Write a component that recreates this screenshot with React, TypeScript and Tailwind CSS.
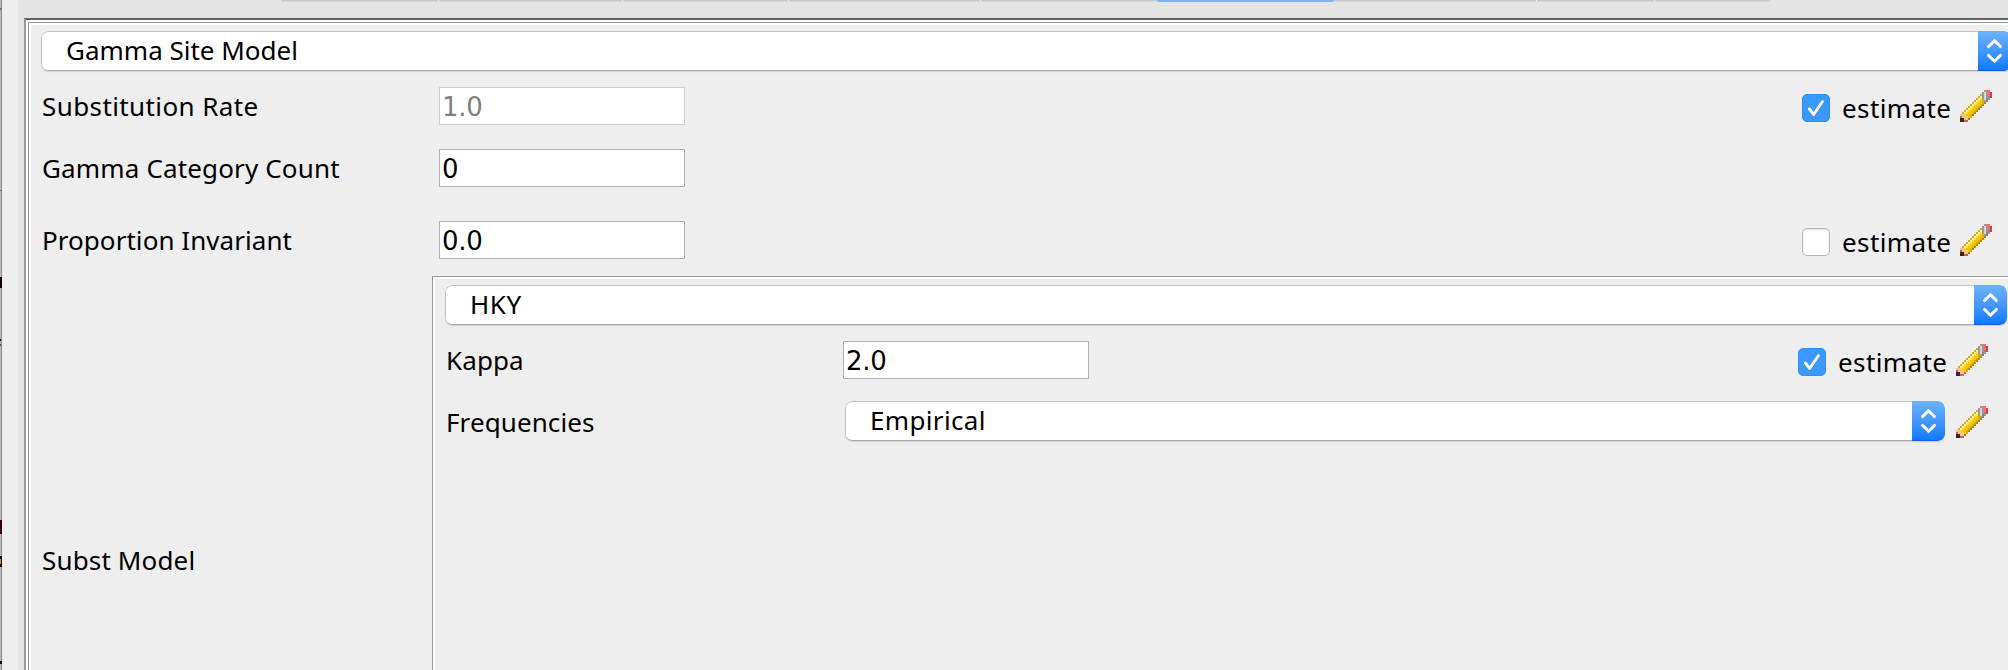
import type { ReactNode } from 'react';

const PENCIL_COLORS: Record<string, string> = {
  g: '#9a9a9a', G: '#d6d6d6', d: '#85858a', p: '#fa6b6b', r: '#cf3f43',
  t: '#dba829', c: '#fff0a0', y: '#ffe02a', o: '#f4c80a', b: '#e0ac00', B: '#b8860b',
  e: '#d0603f', f: '#ffbe96', k: '#2e2a2a',
};

const PENCIL_ROWS = [
  '............gpp.',
  '...........gGgpr',
  '..........tgGgpr',
  '.........tcgGgdr',
  '........tcygGdg.',
  '.......tcyobgd..',
  '......tcyoobB...',
  '.....tcyoobB....',
  '....tcyoobB.....',
  '...tcyoobB......',
  '..tcyoobB.......',
  '.tcyoobB........',
  'ffyoobB.........',
  'effyob..........',
  'kkffe...........',
  'kkee............',
];

function Pencil() {
  return (
    <svg className="h-8 w-8 shrink-0" viewBox="0 0 16 16" shapeRendering="crispEdges">
      {PENCIL_ROWS.flatMap((row, y) =>
        row.split('').map((c, x) =>
          c === '.' ? null : (
            <rect key={`${x}-${y}`} x={x} y={y} width="1" height="1" fill={PENCIL_COLORS[c]} />
          ),
        ),
      )}
    </svg>
  );
}

function Combo({ children, className }: { children: ReactNode; className: string }) {
  return (
    <div
      className={`flex h-10 shrink-0 overflow-hidden rounded-[7px] bg-white shadow-[0_1px_1px_rgba(0,0,0,0.12)] ${className}`}
    >
      <div className="flex-1 rounded-l-[7px] border border-r-0 border-[#c4c4c4] border-b-[#a9a9a9] pl-6 leading-[36px]">
        {children}
      </div>
      <div className="w-[33px] rounded-r-[7px] border-b border-[#0a60f0] bg-linear-to-b from-[#6db3fa] to-[#087aff]">
        <svg className="h-10 w-[33px]" viewBox="0 0 33 40" fill="none" stroke="#fff" strokeWidth="2.9" strokeLinecap="round" strokeLinejoin="miter">
          <path d="M10.5 15.6 16.5 9.8 22.5 15.6M10.5 24.4 16.5 30.2 22.5 24.4" />
        </svg>
      </div>
    </div>
  );
}

function Field({ value, disabled }: { value: string; disabled?: boolean }) {
  return (
    <div
      className={`h-[38px] w-[246px] shrink-0 border bg-white pl-0.5 font-['DejaVu_Sans',sans-serif] leading-[38px] tracking-[-0.3px] ${
        disabled ? 'border-[#cfcfcf] text-[#808080]' : 'border-[#b0b0b0]'
      }`}
    >
      {value}
    </div>
  );
}

function Estimate({ checked }: { checked?: boolean }) {
  return (
    <div className="ml-auto flex items-center pt-1">
      {checked ? (
        <div className="h-7 w-7 rounded-[5px] border border-[#2f8df5] bg-[#3b99fc]">
          <svg className="h-[26px] w-[26px]" viewBox="1 1 26 26" fill="none" strokeLinecap="round" strokeLinejoin="round">
            <path d="M7.4 16 11.7 21.5 20.4 8.8" stroke="#2678d4" strokeWidth="3" opacity=".5" />
            <path d="M7.4 15 11.7 20.5 20.4 7.8" stroke="#fff" strokeWidth="2.9" />
          </svg>
        </div>
      ) : (
        <div className="h-7 w-7 rounded-[5px] border border-[#b5b5b5] bg-white shadow-[inset_0_1px_2px_rgba(0,0,0,0.12)]" />
      )}
      <span className="ml-3 w-[118px] tracking-[0.4px]">estimate</span>
    </div>
  );
}

const TABS = [
  'w-[157px] bg-[#c8c8c8]', 'w-[184px] bg-[#c8c8c8]', 'w-[166px] bg-[#c8c8c8]',
  'w-[192px] bg-[#c8c8c8]', 'w-[177px] bg-[#c8c8c8]', 'w-[177px] bg-[#7fb1ea]',
  'w-[202px] bg-[#c8c8c8]', 'w-[118px] bg-[#c8c8c8]', 'w-[116px] bg-[#c8c8c8]',
];

function TabEdge() {
  return (
    <div className="flex h-[18px] items-start pl-[263px]">
      {TABS.map((tab, i) => (
        <div
          key={i}
          className={`${tab} h-0.5 shrink-0 ${i === 5 ? 'rounded-b-xs' : 'border-b border-[#d9d9d9]'} ${
            i === 0 ? 'rounded-bl-xs' : ''
          } ${[1, 2, 3, 4, 7, 8].includes(i) ? 'border-l border-l-[#f0f0f0]' : ''}`}
        />
      ))}
    </div>
  );
}

function WindowEdge() {
  return (
    <svg className="h-[670px] w-0.5 shrink-0" viewBox="0 0 2 670" shapeRendering="crispEdges">
      <rect width="2" height="670" fill="#bababa" />
      <rect x="1" width="1" height="670" fill="#8c8c8c" />
      <rect y="8" width="2" height="2" fill="#777" />
      <rect y="190" width="2" height="1" fill="#8a7440" />
      <rect y="277" width="2" height="11" fill="#160000" />
      <rect y="339" width="1" height="2" fill="#111" />
      <rect y="344" width="1" height="2" fill="#1a5fa8" />
      <rect x="1" y="350" width="1" height="3" fill="#a08a58" />
      <rect y="520" width="2" height="14" fill="#3a0006" />
      <rect y="556" width="2" height="11" fill="#111" />
      <rect y="559" width="1" height="5" fill="#c98f3c" />
      <rect y="661" width="2" height="3" fill="#111" />
    </svg>
  );
}

export default function App() {
  return (
    <div className="flex h-[670px] w-full overflow-hidden bg-[#eee] font-['Noto_Sans',sans-serif] text-[26px] leading-[40px] whitespace-nowrap text-black">
      <WindowEdge />
      <div className="w-4 shrink-0" />
      <div className="min-w-0 flex-1 bg-[#e4e4e4]">
        <TabEdge />
        <div className="ml-1.5 border-t-2 border-l-2 border-t-[#636363] border-l-[#999]">
          <div className="border-t-2 border-l-2 border-white">
            <div className="border-t border-l border-[#999]">
              <div className="h-[647px] overflow-hidden border-t-2 border-l-2 border-white bg-[#eee] pt-1.5 pl-2.5">
                <Combo className="w-[1970px]">Gamma Site Model</Combo>

                <div className="mt-[15px] flex h-10 items-center pr-4">
                  <div className="w-[398px] shrink-0 pl-px tracking-[0.4px]">Substitution Rate</div>
                  <Field value="1.0" disabled />
                  <Estimate checked />
                  <Pencil />
                </div>

                <div className="mt-[22px] flex h-10 items-center">
                  <div className="w-[398px] shrink-0 pl-px tracking-[0.15px]">Gamma Category Count</div>
                  <Field value="0" />
                </div>

                <div className="mt-8 flex h-10 items-center pr-4">
                  <div className="w-[398px] shrink-0 pl-px tracking-[0.05px]">Proportion Invariant</div>
                  <Field value="0.0" />
                  <Estimate />
                  <Pencil />
                </div>

                <div className="mt-4 flex h-[568px] items-center">
                  <div className="w-[391px] shrink-0 pl-px tracking-[0.15px]">Subst Model</div>
                  <div className="h-full min-w-0 flex-1 border-t border-l border-[#999]">
                    <div className="h-full border-t-2 border-l-2 border-white pt-1.5 pl-2.5">
                      <Combo className="w-[1562px] tracking-[0.6px]">HKY</Combo>

                      <div className="mt-[15px] flex h-10 items-center pr-5">
                        <div className="w-[398px] shrink-0 pl-px tracking-[0.1px]">Kappa</div>
                        <Field value="2.0" />
                        <Estimate checked />
                        <Pencil />
                      </div>

                      <div className="mt-[22px] flex h-10 items-center pr-5">
                        <div className="w-[400px] shrink-0 pl-px tracking-[0.1px]">Frequencies</div>
                        <Combo className="mr-[11px] mb-0.5 flex-1 tracking-[0.35px]">Empirical</Combo>
                        <Pencil />
                      </div>
                    </div>
                  </div>
                </div>
              </div>
            </div>
          </div>
        </div>
      </div>
    </div>
  );
}
